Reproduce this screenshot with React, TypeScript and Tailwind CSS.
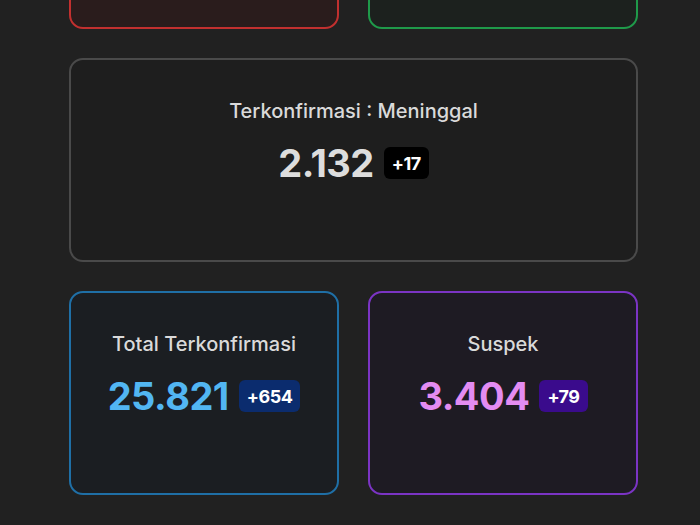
import React from 'react';

type Stat = {
  title: string;
  value: string;
  delta: string;
  card: string;
  valueColor: string;
  badge: string;
};

// Top row is scrolled out of view; only the card frames are visible.
const topCards = ['border-[#c2302f] bg-[#2a1c1c]', 'border-[#1f9a4a] bg-[#1c211e]'];

const bottomStats: Stat[] = [
  { title: 'Total Terkonfirmasi', value: '25.821', delta: '+654', card: 'border-[#1f6fa6] bg-[#1b1e22]', valueColor: 'text-[#52b6f2]', badge: 'bg-[#0b2c6e]' },
  { title: 'Suspek', value: '3.404', delta: '+79', card: 'border-[#7b34c4] bg-[#1e1b23]', valueColor: 'text-[#e38cf2]', badge: 'bg-[#3a0b8c]' },
];

const StatCard: React.FC<{ stat: Stat; wide?: boolean }> = ({ stat, wide }) => (
  <div className={`h-[204px] rounded-[14px] border-2 pt-[37px] flex flex-col items-center ${stat.card} ${wide ? 'col-span-2' : ''}`}>
    <p className="text-[20px] font-medium text-[#dadada] leading-[28px]">{stat.title}</p>
    <div className="mt-[16px] flex items-center gap-[10px]">
      <span className={`text-[38px] font-bold leading-[44px] tracking-[-0.5px] ${stat.valueColor}`}>{stat.value}</span>
      <span className={`rounded-[6px] px-[8px] h-[32px] flex items-center text-[18px] font-bold text-white tracking-[-0.5px] ${stat.badge}`}>
        {stat.delta}
      </span>
    </div>
  </div>
);

export default function App() {
  const deaths: Stat = {
    title: 'Terkonfirmasi : Meninggal',
    value: '2.132',
    delta: '+17',
    card: 'border-[#4a4a4a] bg-[#1e1e1e]',
    valueColor: 'text-[#dddddd]',
    badge: 'bg-black',
  };

  return (
    <div className="h-[525px] overflow-hidden bg-[#212121]" style={{ fontFamily: 'Inter, "Noto Sans", sans-serif' }}>
      <div className="ml-[69px] w-[569px] -mt-[175px] grid grid-cols-2 gap-[29px] pb-[40px]">
        {topCards.map((c, i) => (
          <div key={i} className={`h-[204px] rounded-[14px] border-2 ${c}`} />
        ))}
        <StatCard stat={deaths} wide />
        {bottomStats.map((s) => (
          <StatCard key={s.title} stat={s} />
        ))}
      </div>
    </div>
  );
}
